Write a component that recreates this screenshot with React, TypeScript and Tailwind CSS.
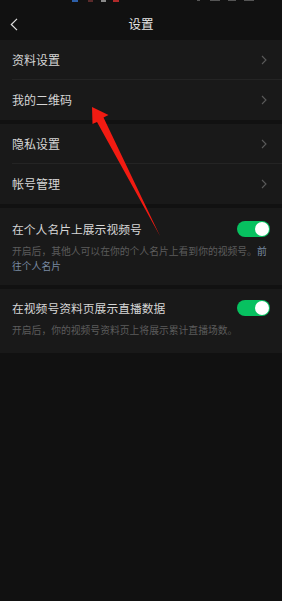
import React from "react";

const font = { fontFamily: '"Noto Sans CJK SC", "Noto Sans", sans-serif' };

function Chevron() {
  return (
    <svg width="6" height="10" viewBox="0 0 6 10" className="shrink-0">
      <path d="M1 1 L5 5 L1 9" fill="none" stroke="#5a5a5a" strokeWidth="1.1" />
    </svg>
  );
}

function Row({ label, divider }: { label: string; divider?: boolean }) {
  return (
    <div className="relative h-[40px] flex items-center pl-[12px] pr-[15px]">
      <span className="flex-1 text-[12px] leading-[16px] text-[#d6d6d6]">{label}</span>
      <Chevron />
      {divider && <div className="absolute left-[12px] right-0 bottom-0 h-px bg-[#242424]" />}
    </div>
  );
}

function Toggle() {
  return (
    <div className="w-[33px] h-[16px] rounded-full bg-[#07c160] flex items-center justify-end pr-[1px] shrink-0">
      <div className="w-[14px] h-[14px] rounded-full bg-white" />
    </div>
  );
}

export default function App() {
  return (
    <div className="relative w-[282px] h-[601px] bg-[#111111] overflow-hidden" style={font}>
      {/* status bar remnants */}
      <div className="h-[2px] flex items-start">
        <div className="ml-[72px] w-[6px] h-[2px] bg-[#2d5fa8]" />
        <div className="ml-[10px] w-[5px] h-[2px] bg-[#5a2a2a]" />
        <div className="ml-[8px] w-[5px] h-[2px] bg-[#8a8a8a]" />
        <div className="ml-[7px] w-[6px] h-[2px] bg-[#b02a2a]" />
        <div className="ml-[78px] w-[3px] h-[1px] bg-[#555]" />
        <div className="ml-[10px] w-[10px] h-[1px] bg-[#555]" />
        <div className="ml-[8px] w-[8px] h-[1px] bg-[#555]" />
        <div className="ml-[8px] w-[10px] h-[1px] bg-[#555]" />
      </div>
      {/* header */}
      <div className="h-[38px] flex items-start pt-[14px] px-[10px]">
        <div className="w-[20px] h-[16px] flex items-center">
          <svg width="8" height="13" viewBox="0 0 8 13">
            <path d="M7 0.8 L1.3 6.5 L7 12.2" fill="none" stroke="#e0e0e0" strokeWidth="1.2" />
          </svg>
        </div>
        <div className="flex-1 text-center text-[12.5px] leading-[16px] text-[#e6e6e6] pr-[20px]">设置</div>
      </div>

      <div className="bg-[#191919]">
        <Row label="资料设置" divider />
        <Row label="我的二维码" />
      </div>
      <div className="h-[4px]" />
      <div className="bg-[#191919]">
        <Row label="隐私设置" divider />
        <Row label="帐号管理" />
      </div>
      <div className="h-[4px]" />
      <div className="bg-[#191919] pl-[12px] pr-[12px] pt-[13px] pb-[11px]">
        <div className="flex items-center h-[16px]">
          <span className="flex-1 text-[11.8px] leading-[16px] text-[#d6d6d6]">在个人名片上展示视频号</span>
          <Toggle />
        </div>
        <div className="mt-[7px] flex flex-col text-[9.8px] leading-[15px] text-[#5c5c5c]">
          <div className="whitespace-nowrap">
            开启后，其他人可以在你的个人名片上看到你的视频号。<span className="text-[#7889a1]">前</span>
          </div>
          <div className="whitespace-nowrap text-[#7889a1]">往个人名片</div>
        </div>
      </div>
      <div className="h-[4px]" />
      <div className="bg-[#191919] pl-[12px] pr-[12px] pt-[11px] pb-[15px]">
        <div className="flex items-center h-[16px]">
          <span className="flex-1 text-[11.8px] leading-[16px] text-[#d6d6d6]">在视频号资料页展示直播数据</span>
          <Toggle />
        </div>
        <div className="mt-[7px] text-[9.8px] leading-[15px] text-[#5c5c5c] whitespace-nowrap">
          开启后，你的视频号资料页上将展示累计直播场数。
        </div>
      </div>

      {/* red annotation arrow */}
      <svg className="absolute left-0 top-0 pointer-events-none" width="282" height="601" viewBox="0 0 282 601">
        <polygon points="92,107 108.5,115 103.5,117.5 160,236 97,122 92.5,124" fill="#f21b12" />
      </svg>
    </div>
  );
}
